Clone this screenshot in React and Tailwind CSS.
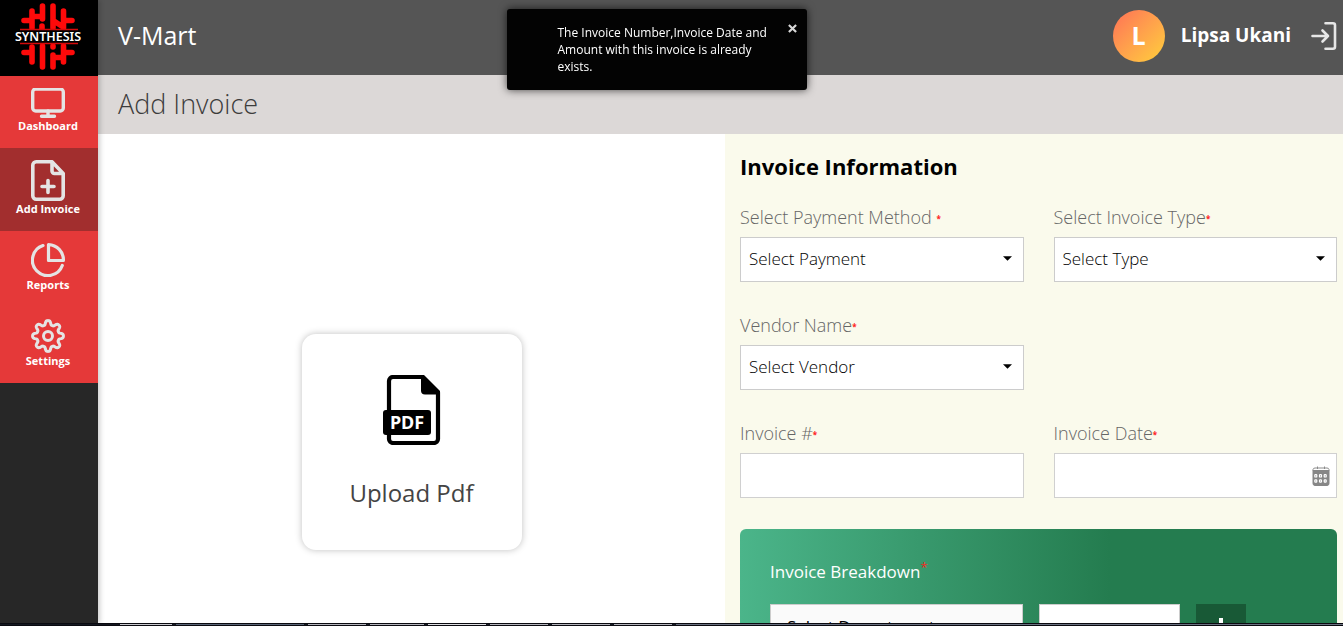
import React from "react";

const SANS = "font-['Open_Sans','Noto_Sans',sans-serif]";

function Logo() {
  return (
    <svg viewBox="0 0 98 76" className="block h-[76px] w-full bg-black" role="img" aria-label="Synthesis">
      <g stroke="#fe0a0a" strokeWidth="5.6" strokeLinecap="round" fill="none">
        <path d="M32 11V28M24 20.5H32M32 16.5H40M42.5 6V19M42 26V29M53 6V28M63.500 11V28M63.500 20.500H72M54 21L63 27" />
        <path d="M32 47V62M24 52.500H32M42.500 46V67M53 55V67M53 46V47M63.500 46V62M63.500 52.500H72M55 57.500H63" />
      </g>
      <rect x="12" y="30" width="72" height="13" fill="#000" />
      <path d="M20 29.500H78M20 43.500H78" stroke="#d30b0b" strokeWidth="1.300" />
      <text x="48" y="41" textAnchor="middle" fontSize="12.500" fontWeight="600" fontFamily="'Noto Sans', sans-serif" fill="#fff">
        SYNTHESIS
      </text>
    </svg>
  );
}

const line = { fill: "none", stroke: "currentColor", strokeLinecap: "round", strokeLinejoin: "round" };

function MonitorIcon() {
  return (
    <svg viewBox="0 0 34 30" className="h-[30px] w-[34px]" {...line} strokeWidth="3.400">
      <rect x="1.700" y="1" width="30.600" height="22" rx="3" />
      <path d="M17 23v5M10.500 28.300h13" />
    </svg>
  );
}

function FilePlusIcon() {
  return (
    <svg viewBox="0 0 34 41" className="h-[41px] w-[34px]" {...line} strokeWidth="3.600">
      <path d="M21 1.800H5.200A3.400 3.400 0 0 0 1.800 5.200v30.600A3.400 3.400 0 0 0 5.200 39.200h23.600a3.400 3.400 0 0 0 3.400-3.400V13.500L21 1.800v9.300a2.400 2.400 0 0 0 2.400 2.400h8.800" />
      <path d="M17 20.500v12M11 26.500h12" />
    </svg>
  );
}

function PieIcon() {
  return (
    <svg viewBox="0 0 34 34" className="h-[34px] w-[34px]" {...line} strokeWidth="3.200">
      <path d="M12 2.600A15.400 15.400 0 1 0 31.300 22.500" />
      <path d="M17.500 1.600V17.500H32.400A15.400 15.400 0 0 0 17.500 1.600Z" />
    </svg>
  );
}

const GEAR_OUTLINE =
  "M" +
  Array.from({ length: 160 }, (_, i) => {
    const angle = (i / 160) * Math.PI * 2;
    const radius = 13.3 + 2.1 * Math.tanh(1.6 * Math.cos(8 * angle)) / Math.tanh(1.6);
    return (17 + radius * Math.cos(angle)).toFixed(2) + " " + (17 + radius * Math.sin(angle)).toFixed(2);
  }).join("L") +
  "Z";

function GearIcon() {
  return (
    <svg viewBox="0 0 34 34" className="h-[34px] w-[34px]" {...line} strokeWidth="3">
      <path d={GEAR_OUTLINE} />
      <circle cx="17" cy="17" r="4.500" />
    </svg>
  );
}

function LogoutIcon() {
  return (
    <svg viewBox="0 0 26 30" className="h-[30px] w-[26px]" {...line} strokeWidth="2.600">
      <path d="M14.500 2.300H22a2 2 0 0 1 2 2v21.400a2 2 0 0 1-2 2h-7.500" />
      <path d="M1.500 15H17M11.500 9.500L17 15l-5.500 5.500" />
    </svg>
  );
}

function PdfIcon() {
  return (
    <svg viewBox="0 0 58 70" className="h-[70px] w-[58px]">
      <path d="M39 2H10a4 4 0 0 0-4 4v58a4 4 0 0 0 4 4h41a4 4 0 0 0 4-4V18Z" fill="none" stroke="#000" strokeWidth="4.200" />
      <path d="M38 0h3l16 16v3.500H42a4 4 0 0 1-4-4Z" />
      <rect x="0" y="35" width="48" height="25" rx="3" />
      <text x="24" y="54" textAnchor="middle" fontSize="18" fontWeight="700" fontFamily="'Noto Sans', sans-serif" fill="#fff">
        PDF
      </text>
    </svg>
  );
}

function CalendarIcon() {
  return (
    <svg viewBox="0 0 18 20" className="h-5 w-[18px]">
      <path d="M1 5V3.500A2 2 0 0 1 3 2H15A2 2 0 0 1 17 3.500V5M5.500 .5V3M12.500 .5V3" fill="none" stroke="#8b8b8b" />
      <path d="M1 4.500H17V17.500a2 2 0 0 1-2 2H3a2 2 0 0 1-2-2Z" fill="#868686" stroke="#868686" />
      <g fill="#868686" stroke="#fff" strokeWidth="1.200">
        <rect x="2.800" y="8.600" width="2" height="2.400" rx=".6" />
        <rect x="7.500" y="8.600" width="2" height="2.400" rx=".6" />
        <rect x="12.200" y="8.600" width="2" height="2.400" rx=".6" />
        <rect x="2.800" y="13.800" width="2" height="2.400" rx=".6" />
        <rect x="7.500" y="13.800" width="2" height="2.400" rx=".6" />
        <rect x="12.200" y="13.800" width="2" height="2.400" rx=".6" />
      </g>
    </svg>
  );
}

const NAV = [
  { label: "Dashboard", icon: <MonitorIcon /> },
  { label: "Add Invoice", icon: <FilePlusIcon />, active: true },
  { label: "Reports", icon: <PieIcon /> },
  { label: "Settings", icon: <GearIcon /> },
];

function Sidebar() {
  return (
    <aside className="relative z-10 flex w-[98px] shrink-0 flex-col bg-[#272727] shadow-[2px_0_5px_rgba(0,0,0,0.2)]">
      <Logo />
      <nav className="flex flex-col bg-[#e53939]">
        {NAV.map((item) => (
          <a
            key={item.label}
            href="#"
            aria-current={item.active ? "page" : undefined}
            className={
              "flex flex-col items-center pt-3 pr-0.5 pb-3.5 text-[#e4e4e4] " + (item.active ? "bg-[#a22e2e]" : "")
            }
          >
            {item.icon}
            <span className="text-[11px] leading-4 font-bold text-white">{item.label}</span>
          </a>
        ))}
      </nav>
    </aside>
  );
}

function Field({ id, label, spaced, children }) {
  return (
    <div className="flex flex-col gap-2">
      <label htmlFor={id} className="text-[18px] leading-6 font-light text-[#666]">
        {label}
        {spaced ? " " : ""}
        <span className="align-[2px] text-[8px] leading-none font-bold text-[#ff2020]">*</span>
      </label>
      {children}
    </div>
  );
}

function Select({ id, placeholder }) {
  return (
    <div className="relative">
      <select
        id={id}
        className="h-[45px] w-full appearance-none border border-[#ccc] bg-white px-2 pb-0.5 text-[17px] font-light text-black"
      >
        <option>{placeholder}</option>
      </select>
      <svg viewBox="0 0 10 5" className="pointer-events-none absolute top-[19px] right-3 h-[5px] w-[9px]">
        <path d="M0 0H10L5 5Z" />
      </svg>
    </div>
  );
}

const TEXT_BOX = "h-[45px] w-full border border-[#d0d0d0] bg-white px-2 text-[17px]";

function InvoiceForm() {
  return (
    <form className="bg-[#fafaec] pt-3.5 pr-1.5 pl-[15px]">
      <h2 className="mb-[21px] text-[22px] leading-9 font-bold text-black">Invoice Information</h2>
      <div className="grid grid-cols-2 gap-x-[30px] gap-y-[31px]">
        <Field id="payment" label="Select Payment Method" spaced>
          <Select id="payment" placeholder="Select Payment" />
        </Field>
        <Field id="type" label="Select Invoice Type">
          <Select id="type" placeholder="Select Type" />
        </Field>
        <div className="col-span-2 grid grid-cols-2 gap-x-[30px]">
          <Field id="vendor" label="Vendor Name">
            <Select id="vendor" placeholder="Select Vendor" />
          </Field>
        </div>
        <Field id="number" label="Invoice #">
          <input id="number" type="text" className={TEXT_BOX} />
        </Field>
        <Field id="date" label="Invoice Date">
          <div className="relative">
            <input id="date" type="text" className={TEXT_BOX} />
            <button type="button" aria-label="Open calendar" className="absolute top-[13px] right-[7px]">
              <CalendarIcon />
            </button>
          </div>
        </Field>
      </div>

      <section className="mt-[31px] rounded-md bg-linear-to-r from-[#4bb58a] to-[#247c4f] to-62% px-[30px] pt-[31px] pb-[30px]">
        <h3 className="text-[17px] leading-6 text-white">
          Invoice Breakdown<sup className="text-[13px] leading-none text-[#f32a1f]">*</sup>
        </h3>
        <div className="mt-5 grid grid-cols-[9fr_5fr_50px] gap-4 pr-[61px]">
          <select
            aria-label="Department"
            className="h-[45px] appearance-none border border-[#ccc] bg-[#fafafa] px-4 text-[17px] text-black"
          >
            <option>Select Department</option>
          </select>
          <input aria-label="Amount" type="text" className="h-[45px] w-full border border-[#ccc] bg-white px-2" />
          <button
            type="button"
            aria-label="Add line"
            className="flex h-[45px] items-center justify-center bg-[#185936] text-white"
          >
            <svg viewBox="0 0 18 18" className="size-[18px]" stroke="currentColor" strokeWidth="4">
              <path d="M9 0V18M0 9H18" />
            </svg>
          </button>
        </div>
      </section>
    </form>
  );
}

function Toast() {
  return (
    <div
      role="alert"
      className="fixed top-[9px] left-1/2 z-20 w-[300px] -translate-x-[165px] rounded-[3px] bg-[#030303] py-[15px] pr-[30px] pl-[51px] text-[12px] leading-[17px] text-white shadow-[0_0_8px_rgba(0,0,0,0.7)]"
    >
      The Invoice Number,Invoice Date and Amount with this invoice is already exists.
      <button type="button" aria-label="Close" className="absolute top-[15px] right-2.5 text-[#d8d8d8]">
        <svg viewBox="0 0 10 10" className="h-[9px] w-[9px]" stroke="currentColor" strokeWidth="2.400">
          <path d="M1 1L9 9M9 1L1 9" />
        </svg>
      </button>
    </div>
  );
}

function Taskbar() {
  return (
    <footer className="relative z-10 flex h-[3px] shrink-0 gap-1 border-y border-[#0a0a10] bg-[#141821] pl-[120px]">
      <span className="w-[52px] bg-[#c9c9cf]" />
      <span className="w-32 bg-[#5b6678]" />
      <span className="w-[58px] bg-[#b4b4bc]" />
      <span className="w-[54px] bg-[#b4b4bc]" />
      <span className="w-[58px] bg-[#dedee2]" />
      <span className="w-[58px] bg-[#b4b4bc]" />
      <span className="w-[58px] bg-[#b4b4bc]" />
      <span className="w-[58px] bg-[#b4b4bc]" />
      <span className="flex-1 bg-[#6b7282]" />
    </footer>
  );
}

export default function App() {
  return (
    <div className={"flex h-screen flex-col overflow-hidden bg-white " + SANS}>
      <div className="flex min-h-0 flex-1">
        <Sidebar />
        <div className="flex min-w-0 flex-1 flex-col">
          <header className="flex h-[75px] shrink-0 items-center bg-[#555] pr-1.5 pb-1 pl-5 text-white">
            <p className="text-[25px]">V-Mart</p>
            <div className="ml-auto flex items-center">
              <span className="mr-4 flex size-[52px] items-center justify-center rounded-full bg-linear-135 from-[#ff6f55] to-[#ffcf38] text-[25px] font-bold">
                L
              </span>
              <span className="mr-5 text-[19px] font-bold">Lipsa Ukani</span>
              <button type="button" aria-label="Log out" className="text-[#e6e6e6]">
                <LogoutIcon />
              </button>
            </div>
          </header>
          <h1 className="flex h-[59px] shrink-0 items-center bg-[#dcd8d7] pl-5 text-[27px] font-light text-[#3c3c3c]">
            Add Invoice
          </h1>
          <main className="grid min-h-0 flex-1 grid-cols-[627fr_618fr] overflow-hidden">
            <section className="flex justify-center pt-[200px]">
              <button
                type="button"
                className="flex h-[216px] w-[220px] flex-col items-center rounded-[14px] bg-white pt-[41px] text-[24px] leading-8 text-[#444] shadow-[0_0_7px_rgba(0,0,0,0.25)]"
              >
                <PdfIcon />
                <span className="mt-8">Upload Pdf</span>
              </button>
            </section>
            <InvoiceForm />
          </main>
        </div>
      </div>
      <Taskbar />
      <Toast />
    </div>
  );
}
